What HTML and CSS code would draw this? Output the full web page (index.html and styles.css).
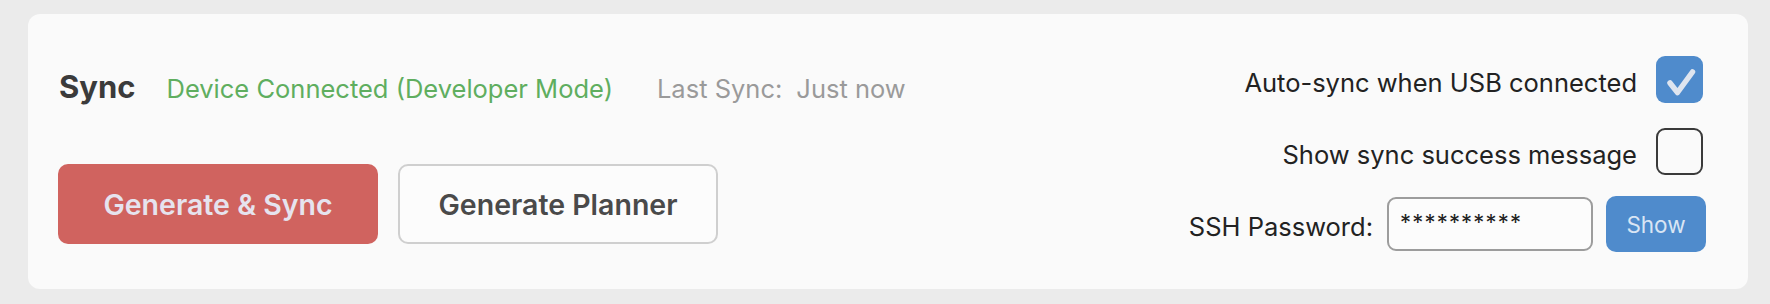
FILE: index.html
```html
<!DOCTYPE html>
<html lang="en">
<head>
<meta charset="utf-8">
<title>Sync</title>
<link rel="stylesheet" href="styles.css">
</head>
<body>
<div class="panel">
  <div class="left">
    <div class="header">
      <span class="title">Sync</span>
      <span class="status">Device Connected (Developer Mode)</span>
      <span class="last"><span>Last Sync:</span><span>Just now</span></span>
    </div>
    <div class="actions">
      <button class="btn btn-primary">Generate &amp; Sync</button>
      <button class="btn btn-secondary">Generate Planner</button>
    </div>
  </div>
  <div class="right">
    <label class="opt opt-first">
      <span class="opt-label">Auto-sync when USB connected</span>
      <span class="check checked">
        <svg viewBox="0 0 46 46" width="46" height="46"><path d="M13 26 L20.5 35.5 L35.5 15" fill="none" stroke="#dfe5ef" stroke-width="5.5" stroke-linecap="round" stroke-linejoin="round"/></svg>
      </span>
    </label>
    <label class="opt opt-second">
      <span class="opt-label">Show sync success message</span>
      <span class="check"></span>
    </label>
    <div class="pw-row">
      <span class="pw-label">SSH Password:</span>
      <div class="pw-input">**********</div>
      <button class="btn-show">Show</button>
    </div>
  </div>
</div>
</body>
</html>
```
FILE: styles.css
```css
html, body {
  margin: 0;
  padding: 0;
}
body {
  background: #ebebeb;
  padding: 14px 22px 15px 28px;
  font-family: Inter, "Noto Sans", sans-serif;
}
.panel {
  background: #fafafa;
  border-radius: 12px;
  height: 275px;
  box-sizing: border-box;
  display: flex;
  justify-content: space-between;
  padding: 0 42px 0 30px;
}
.left {
  display: flex;
  flex-direction: column;
  padding-top: 54px;
}
.header {
  display: flex;
  align-items: baseline;
  height: 40px;
}
.title {
  font-size: 31px;
  font-weight: 700;
  color: #3b3b3b;
  margin-left: 1px;
}
.status {
  font-size: 25.5px;
  color: #5fae5f;
  margin-left: 31px;
}
.last {
  font-size: 25.5px;
  color: #9a9a9a;
  margin-left: 44px;
  display: flex;
  gap: 14px;
}
.actions {
  display: flex;
  gap: 20px;
  margin-top: 56px;
}
.btn {
  width: 320px;
  height: 80px;
  border-radius: 10px;
  font-family: Inter, "Noto Sans", sans-serif;
  font-size: 28.5px;
  font-weight: 600;
  cursor: pointer;
}
.btn-primary {
  background: #d0635f;
  color: #e6e3ee;
  border: none;
}
.btn-secondary {
  background: #fcfcfc;
  color: #4a4a4a;
  border: 2px solid #cfcfcf;
}
.right {
  display: flex;
  flex-direction: column;
  align-items: flex-end;
  padding-top: 42px;
}
.opt {
  display: flex;
  align-items: center;
  gap: 19px;
  margin-right: 3px;
}
.opt-second {
  margin-top: 25px;
}
.opt-label {
  font-size: 25.5px;
  color: #222;
  padding-top: 6px;
}
.check {
  width: 47px;
  height: 47px;
  box-sizing: border-box;
  border-radius: 9px;
  border: 2px solid #3a3a3a;
  display: flex;
  align-items: center;
  justify-content: center;
  background: #fafafa;
}
.check.checked {
  background: #4f8bcc;
  border: none;
}
.check svg {
  display: block;
}
.pw-row {
  display: flex;
  align-items: center;
  margin-top: 21px;
}
.pw-label {
  font-size: 25.5px;
  color: #222;
  padding-top: 5px;
  margin-right: 14px;
}
.pw-input {
  width: 206px;
  height: 54px;
  box-sizing: border-box;
  border: 2px solid #9c9c9c;
  border-radius: 9px;
  background: #fcfcfc;
  font-size: 22px;
  color: #222;
  padding: 12px 0 0 11px;
  letter-spacing: 1.2px;
  line-height: 1;
}
.btn-show {
  margin-left: 13px;
  width: 100px;
  height: 56px;
  border: none;
  border-radius: 10px;
  background: #4f8bcc;
  color: #d9e5f4;
  font-family: Inter, "Noto Sans", sans-serif;
  font-size: 22.5px;
}
```
